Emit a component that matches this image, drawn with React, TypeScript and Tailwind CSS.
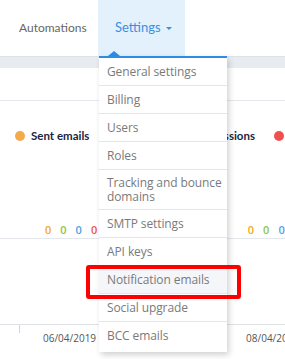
import React from 'react';

const menuItems = [
  { label: 'General settings' },
  { label: 'Billing' },
  { label: 'Users' },
  { label: 'Roles' },
  { label: 'Tracking and bounce domains', tall: true },
  { label: 'SMTP settings' },
  { label: 'API keys' },
  { label: 'Notification emails', active: true },
  { label: 'Social upgrade' },
  { label: 'BCC emails' },
];

const zeros = ['text-[#f5a623]', 'text-[#8cc63f]', 'text-[#4fa3e3]', 'text-[#f0524f]'];

export default function App() {
  return (
    <div
      className="relative w-[285px] h-[359px] overflow-hidden bg-white text-[12px]"
      style={{ fontFamily: '"Open Sans", "Noto Sans", sans-serif' }}
    >
      {/* top nav */}
      <div className="flex h-[56px] items-stretch bg-white" style={{ fontFamily: 'Lato, sans-serif' }}>
        <div className="flex w-[98px] items-center pl-[19px] text-[#666] text-[12px]">Automations</div>
        <div className="relative flex w-[87px] items-center bg-[#e3f1fc] pl-[17px] text-[#3b8fe0] text-[13px]">
          Settings
          <span className="ml-[5px] mt-[1px] border-x-[3px] border-t-[3px] border-x-transparent border-t-[#3b8fe0]" />
          <span className="absolute bottom-0 left-[10px] border-x-[6px] border-b-[5px] border-x-transparent border-b-[#2f8de4]" />
        </div>
      </div>
      <div className="h-[12px] border-t border-[#dde2e8] bg-[#e8ecf1]" />

      {/* page body */}
      <div className="h-[33px] border-b border-[#e4e7eb]" />
      <div className="flex h-[66px] items-center justify-between pl-[15px] pt-[3px]" style={{ fontFamily: 'Lato, sans-serif' }}>
        <div className="flex items-center gap-[6px]">
          <span className="h-[10px] w-[10px] rounded-full bg-[#f5a94a]" />
          <span className="font-bold text-[#1c2541] text-[11.5px]">Sent emails</span>
        </div>
        <div className="flex items-center gap-[19px]">
          <span className="font-bold text-[#1c2541] text-[11.5px]">Sessions</span>
          <span className="mr-[1px] h-[10px] w-[10px] rounded-full bg-[#f0504f]" />
        </div>
      </div>
      <div className="flex h-[71px] items-end justify-between">
        <div className="flex gap-[9px] pl-[45px] text-[11px] font-semibold">
          {zeros.map((c, i) => (
            <span key={i} className={c}>0</span>
          ))}
        </div>
        <div className="-mr-[15px] flex gap-[9px] text-[11px] font-semibold">
          {zeros.map((c, i) => (
            <span key={i} className={c}>0</span>
          ))}
        </div>
      </div>
      <div className="h-[86px] border-t border-[#e4e7eb]" />
      <div className="relative border-t border-[#dfe3e8]">
        <span className="absolute left-[19px] top-0 h-[8px] w-px bg-[#cfd5dc]" />
        <div className="flex pl-[43px] pt-[6px] text-[10px] text-[#555] whitespace-nowrap">
          <span>06/04/2019</span>
          <span className="ml-[150px]">08/04/2019</span>
        </div>
      </div>

      {/* dropdown */}
      <div className="absolute left-[99px] top-[56px] w-[128px] border-t-2 border-[#2f8de4] bg-white pb-[2px] shadow-[2px_3px_6px_rgba(0,0,0,0.18)]">
        {menuItems.map((item, i) => (
          <div
            key={item.label}
            className={`flex items-center pl-[8px] pr-[2px] text-[#7a7a7a] leading-[14px] tracking-[-0.1px] ${
              item.tall ? 'h-[40px]' : 'h-[28px]'
            } ${i < menuItems.length - 1 ? 'border-b border-[#e6e6e6]' : ''} ${item.active ? 'bg-[#f4f6f9]' : ''}`}
          >
            {item.label}
          </div>
        ))}
      </div>

      {/* highlight box */}
      <div className="absolute left-[86px] top-[265px] h-[34px] w-[155px] rounded-[3px] border-4 border-[#ff0000]" />
    </div>
  );
}
